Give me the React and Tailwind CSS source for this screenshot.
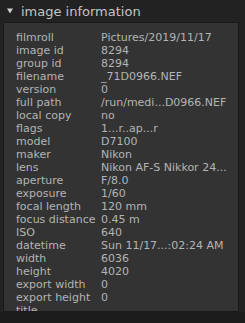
export default function App() {
  const rows = [
    ["filmroll", "Pictures/2019/11/17"],
    ["image id", "8294"],
    ["group id", "8294"],
    ["filename", "_71D0966.NEF"],
    ["version", "0"],
    ["full path", "/run/medi...D0966.NEF"],
    ["local copy", "no"],
    ["flags", "1...r..ap...r"],
    ["model", "D7100"],
    ["maker", "Nikon"],
    ["lens", "Nikon AF-S Nikkor 24..."],
    ["aperture", "F/8.0"],
    ["exposure", "1/60"],
    ["focal length", "120 mm"],
    ["focus distance", "0.45 m"],
    ["ISO", "640"],
    ["datetime", "Sun 11/17...:02:24 AM"],
    ["width", "6036"],
    ["height", "4020"],
    ["export width", "0"],
    ["export height", "0"],
    ["title", "-"],
  ];
  return (
    <div className="w-[245px] h-[323px] bg-[#1c1c1c] flex flex-col overflow-hidden" style={{ fontFamily: '"DejaVu Sans", sans-serif' }}>
      <div className="bg-[#222222] flex flex-col">
        <div className="h-[22px] flex items-center pl-[7px] gap-[8px] text-[#c4c4c4]">
          <svg width="6" height="6" viewBox="0 0 6 6"><path d="M0 0.5 L6 0.5 L3 5.5 Z" fill="#d0d0d0" /></svg>
          <span className="text-[13px] leading-none">image information</span>
        </div>
        <div className="ml-[3px] w-[236px] h-[290px] bg-[#333333] border border-[#1a1a1a] overflow-hidden pt-[8px]">
          {rows.map(([k, v]) => (
            <div key={k} className="flex h-[13px] items-center text-[11px] text-[#b4b4b4] leading-none">
              <span className="w-[97px] pl-[12px] shrink-0 whitespace-nowrap">{k}</span>
              <span className="whitespace-nowrap">{v}</span>
            </div>
          ))}
        </div>
      </div>
    </div>
  );
}
